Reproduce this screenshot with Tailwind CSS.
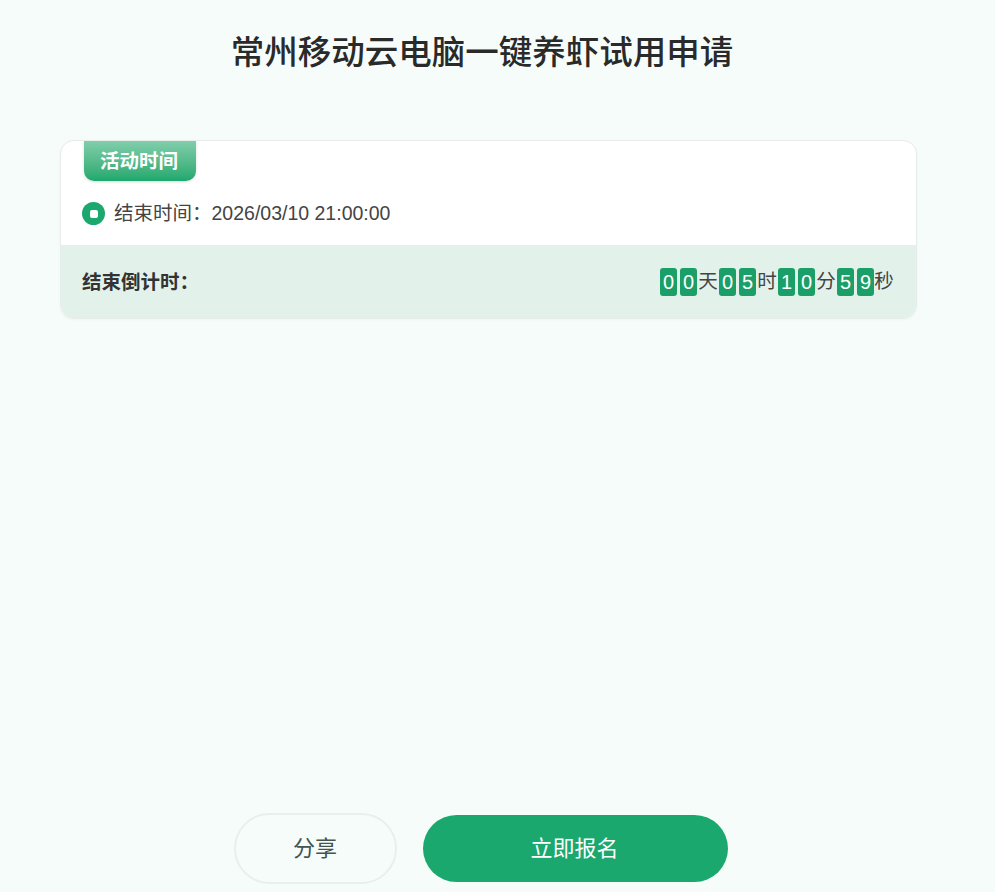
<!DOCTYPE html>
<html lang="zh-CN">
<head>
<meta charset="utf-8">
<script src="https://cdn.jsdelivr.net/npm/@tailwindcss/browser@4"></script>
</head>
<body class="bg-[#f6fcfa] font-['Liberation_Sans','Noto_Sans_CJK_SC',sans-serif]">
<div class="relative h-[892px] w-[995px] overflow-hidden">
  <h1 class="w-[964px] pt-[30px] text-center text-[33.5px] leading-[46px] font-medium text-[#2a2a2a]">常州移动云电脑一键养虾试用申请</h1>
  <section class="mx-[60px] mt-[64px] w-[857px] overflow-hidden rounded-[14px] border border-[#e6ecea] bg-white shadow-[0_1px_3px_rgba(0,0,0,0.03)]">
    <div class="ml-[23px] flex h-[40px] w-[112px] items-center justify-center rounded-b-[10px] bg-gradient-to-b from-[#7fceab] to-[#1ba86e] pt-[1px] pr-[2px] text-[19.5px] font-bold text-white shadow-[0_1px_3px_rgba(0,0,0,0.15)]">活动时间</div>
    <div class="flex h-[64px] items-center pt-[1px] pl-[21px] text-[19.5px] text-[#444]">
      <span class="mr-[9px] flex h-[23px] w-[23px] items-center justify-center rounded-full bg-[#1ba86e]"><span class="h-[8px] w-[8px] rounded-[2px] bg-white"></span></span>
      <span class="mt-[1px]">结束时间：</span><span class="mt-[1px]">2026/03/10 21:00:00</span>
    </div>
    <div class="flex h-[73px] items-center justify-between bg-[#e2f2eb] pt-[1px] pr-[22px] pl-[21px]">
      <span class="mt-[1px] text-[19.5px] font-bold text-[#333]">结束倒计时：</span>
      <div class="flex items-center text-[19.5px] text-[#444]">
        <div class="flex gap-[3px]">
          <span class="flex h-[28px] w-[17px] items-center justify-center rounded-[3px] bg-[#1b9f69] text-[20px] text-white">0</span>
          <span class="flex h-[28px] w-[17px] items-center justify-center rounded-[3px] bg-[#1b9f69] text-[20px] text-white">0</span>
        </div>
        <span class="w-[22px] text-center">天</span>
        <div class="flex gap-[3px]">
          <span class="flex h-[28px] w-[17px] items-center justify-center rounded-[3px] bg-[#1b9f69] text-[20px] text-white">0</span>
          <span class="flex h-[28px] w-[17px] items-center justify-center rounded-[3px] bg-[#1b9f69] text-[20px] text-white">5</span>
        </div>
        <span class="w-[22px] text-center">时</span>
        <div class="flex gap-[3px]">
          <span class="flex h-[28px] w-[17px] items-center justify-center rounded-[3px] bg-[#1b9f69] text-[20px] text-white">1</span>
          <span class="flex h-[28px] w-[17px] items-center justify-center rounded-[3px] bg-[#1b9f69] text-[20px] text-white">0</span>
        </div>
        <span class="w-[22px] text-center">分</span>
        <div class="flex gap-[3px]">
          <span class="flex h-[28px] w-[17px] items-center justify-center rounded-[3px] bg-[#1b9f69] text-[20px] text-white">5</span>
          <span class="flex h-[28px] w-[17px] items-center justify-center rounded-[3px] bg-[#1b9f69] text-[20px] text-white">9</span>
        </div>
        <span class="w-[20px] text-center">秒</span>
      </div>
    </div>
  </section>
  <div class="absolute top-[813px] left-[234px] flex items-center gap-[26px]">
    <button class="flex h-[71px] w-[163px] items-center justify-center rounded-full border-2 border-[#e9efed] bg-[#f6fcfa] pr-[1px] text-[22px] text-[#44544e]">分享</button>
    <button class="flex h-[67px] w-[305px] items-center justify-center rounded-full bg-[#1ba86e] pr-[2px] text-[22px] text-white">立即报名</button>
  </div>
</div>
</body>
</html>
